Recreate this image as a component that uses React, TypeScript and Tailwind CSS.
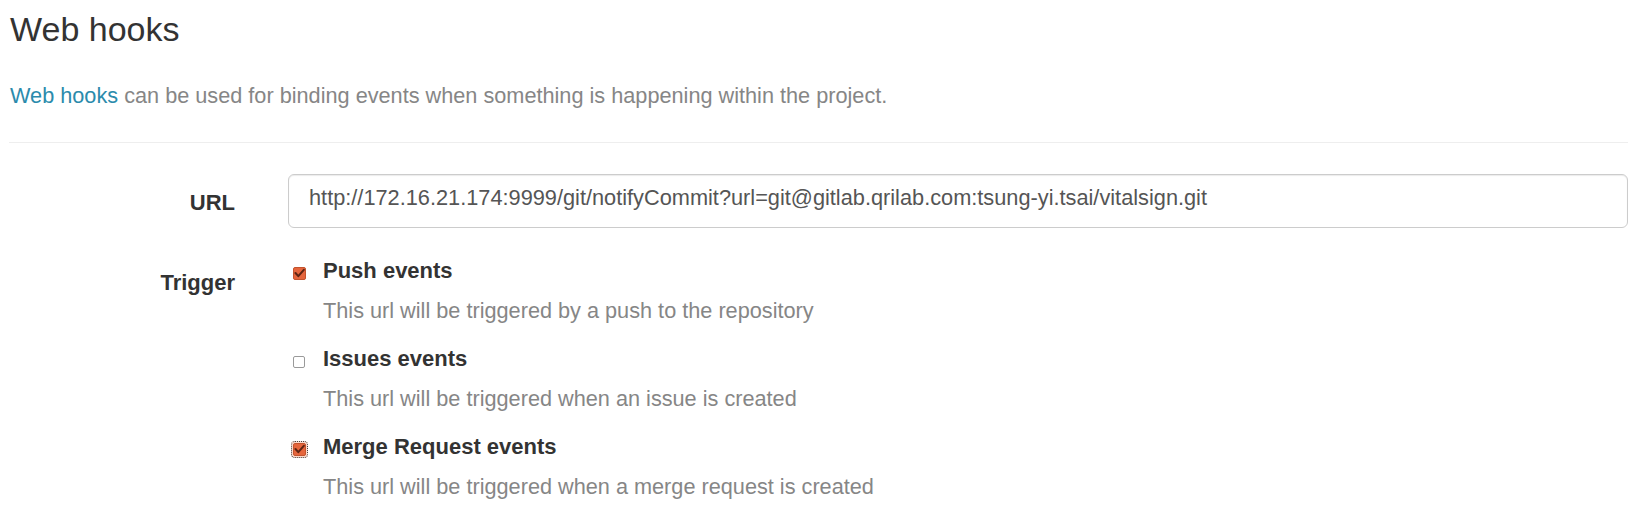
const TRIGGERS = [
  { title: 'Push events', description: 'This url will be triggered by a push to the repository', checked: true, focused: false },
  { title: 'Issues events', description: 'This url will be triggered when an issue is created', checked: false, focused: false },
  { title: 'Merge Request events', description: 'This url will be triggered when a merge request is created', checked: true, focused: true },
];

function Checkbox({ checked, focused }: { checked: boolean; focused: boolean }) {
  return (
    <span
      className={
        checked
          ? focused
            ? 'mt-[11px] flex h-[13px] w-[13px] shrink-0 items-center justify-center rounded-[2px] border border-[#c4532d] bg-[#e5653c] shadow-[0_0_0_2px_#fbd9cc] outline outline-1 outline-offset-[1px] outline-dotted outline-[#444]'
            : 'mt-[11px] flex h-[13px] w-[13px] shrink-0 items-center justify-center rounded-[2px] border border-[#c4532d] bg-[#e5653c]'
          : 'mt-[12px] flex h-[12px] w-[12px] shrink-0 rounded-[2px] border border-[#9a9a9a] bg-white'
      }
    >
      {checked && (
        <svg viewBox="0 0 11 11" className="h-[11px] w-[11px]">
          <polyline points="1.5,5 4.3,8.2 9.8,1.8" fill="none" stroke="#5e2412" strokeWidth="2" strokeLinecap="round" strokeLinejoin="round" />
        </svg>
      )}
    </span>
  );
}

export default function App() {
  return (
    <div className="min-h-[520px] bg-white pl-[9px] pr-[8px] font-['Liberation_Sans',Arial,sans-serif] text-[#333]">
      <h3 className="pl-px pt-[9px] text-[34px] font-normal leading-[40px]">Web hooks</h3>

      <p className="mt-[32px] pl-px text-[21.7px] leading-[30px] text-[#868686]">
        <a href="#" className="text-[#2b8bac]">Web hooks</a> can be used for binding events when something is happening within the project.
      </p>

      <hr className="mt-[31px] border-0 border-t border-[#eeeeee]" />

      <form className="mt-[31px] flex flex-col gap-[28px]">
        <div className="flex items-start">
          <label className="w-[226px] shrink-0 pt-[14px] text-right text-[22px] font-bold leading-[30px]">URL</label>
          <input
            type="text"
            defaultValue="http://172.16.21.174:9999/git/notifyCommit?url=git@gitlab.qrilab.com:tsung-yi.tsai/vitalsign.git"
            className="ml-[53px] h-[54px] flex-1 rounded-[6px] border border-[#cccccc] bg-white pb-[7px] pl-[20px] text-[21.75px] text-[#555] shadow-[inset_0_1px_1px_rgba(0,0,0,0.08)] outline-none"
          />
        </div>

        <div className="flex items-start">
          <label className="w-[226px] shrink-0 pt-[12px] text-right text-[22px] font-bold leading-[30px]">Trigger</label>
          <div className="ml-[58px] flex flex-col gap-[18px]">
            {TRIGGERS.map((t) => (
              <div key={t.title} className="flex items-start">
                <Checkbox checked={t.checked} focused={t.focused} />
                <div className={t.checked ? 'ml-[17px]' : 'ml-[18px]'}>
                  <div className="text-[22px] font-bold leading-[30px]">{t.title}</div>
                  <div className="mt-[10px] text-[21.7px] leading-[30px] text-[#868686]">{t.description}</div>
                </div>
              </div>
            ))}
          </div>
        </div>
      </form>
    </div>
  );
}
